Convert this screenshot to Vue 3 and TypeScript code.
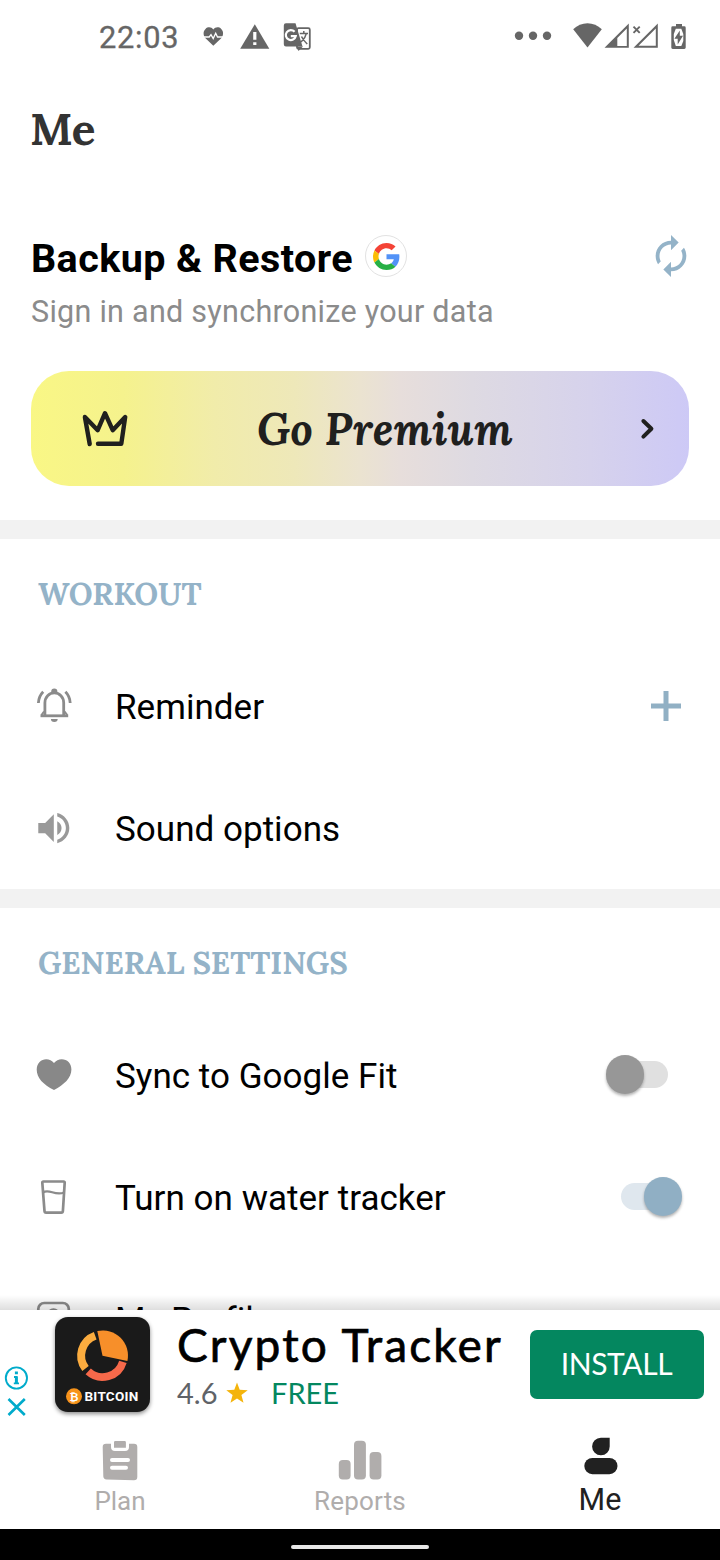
<script setup lang="ts">
interface Row {
  id: string
  label: string
  action?: 'add' | 'off' | 'on'
}

interface Section {
  title: string
  cls: string
  rows: Row[]
}

const sections: Section[] = [
  {
    title: 'WORKOUT',
    cls: 'workout',
    rows: [
      { id: 'bell', label: 'Reminder', action: 'add' },
      { id: 'sound', label: 'Sound options' },
    ],
  },
  {
    title: 'GENERAL SETTINGS',
    cls: 'general',
    rows: [
      { id: 'heart', label: 'Sync to Google Fit', action: 'off' },
      { id: 'glass', label: 'Turn on water tracker', action: 'on' },
      { id: 'profile', label: 'My Profile' },
    ],
  },
]
</script>

<template>
  <div class="screen">
    <div class="scroll">
      <header class="status">
        <span class="clock">22:03</span>
        <svg class="notif" width="112" height="32" viewBox="200 20 112 32">
          <path fill="#666" d="M213.300 45.700L205.500 38.200C203 35.300 203 31 205.500 28.900C208 26.600 211.400 27 213.300 29.400C215.300 27 218.800 26.600 221.200 28.900C223.700 31 223.700 35.300 221.200 38.200Z" />
          <path fill="none" stroke="#fff" stroke-width="1.300" d="M203 37H209.200L211 34.600L213.200 38.600L215.700 33.300L217.500 37H224" />
          <path fill="#666" d="M254.800 24.200L269.300 48.700H240.200Z" />
          <path fill="#fff" d="M253.200 32h3.200v7.800h-3.200zM253.200 42.200h3.200v2.900h-3.200z" />
          <rect x="297" y="28.200" width="12.800" height="20.600" rx="1.500" fill="none" stroke="#666" stroke-width="1.800" />
          <path fill="#666" d="M286 23.300H295.500L302.500 46.400H286A2.200 2.200 0 0 1 283.800 44.200V25.500A2.200 2.200 0 0 1 286 23.300Z" />
          <path fill="#666" d="M296.500 46.500h6.500l-4.500 4.500z" />
          <path fill="none" stroke="#666" stroke-width="1.500" d="M299.800 33.500H308M303.800 31V33.500M306.300 33.700C305.500 38 302.500 40.500 301 42M301.500 36.500C303 40 305 41.800 307.300 44" />
          <path fill="none" stroke="#fff" stroke-width="2.200" d="M294.600 31.800A5 5 0 1 0 295.700 36.200H290.800" />
        </svg>
        <svg class="system" width="176" height="32" viewBox="512 20 176 32">
          <g fill="#666">
            <circle cx="519" cy="35.800" r="4.200" />
            <circle cx="533" cy="35.800" r="4.200" />
            <circle cx="547" cy="35.800" r="4.200" />
            <path d="M573.200 29.300C581 21.300 594 21.300 601.800 29.300L587.500 47.500Z" />
            <path fill-rule="evenodd" d="M604.500 47.800L628.800 23.500V47.800ZM617.300 45.900H626.800V28.600L617.300 38Z" />
            <path fill-rule="evenodd" d="M633.500 47.800L657.800 23.500V47.800ZM638.500 45.800H655.800V28.500Z" />
            <path fill-rule="evenodd" d="M676 24H682V26.300H684.300A1.400 1.400 0 0 1 685.700 27.700V47.500A1.400 1.400 0 0 1 684.300 48.900H672.700A1.400 1.400 0 0 1 671.300 47.500V27.700A1.400 1.400 0 0 1 672.700 26.300H676ZM675.800 28.800L673.800 34V40L675.800 46L681.300 46L683.300 41V34L681.300 28.800Z" />
            <path d="M679.800 30.500V35.800H683L677.700 44.500V38.800H674.400Z" />
          </g>
          <path stroke="#666" stroke-width="1.900" d="M633.500 26.600L639.700 32.800M639.700 26.600L633.500 32.800" />
        </svg>
      </header>

      <h1 class="page-title">Me</h1>

      <section class="backup">
        <div class="backup-head">
          <h2>Backup &amp; Restore</h2>
          <span class="badge">
            <svg width="27" height="27" viewBox="0 0 48 48">
              <path fill="#f44336" d="M24 9.500c3.540 0 6.710 1.220 9.210 3.600l6.850-6.850C35.900 2.380 30.470 0 24 0 14.620 0 6.510 5.380 2.560 13.220l7.980 6.190C12.430 13.720 17.740 9.500 24 9.500z" />
              <path fill="#5292f7" d="M46.980 24.550c0-1.570-.15-3.090-.38-4.550H24v9.020h12.940c-.58 2.960-2.260 5.480-4.780 7.180l7.730 6c4.510-4.180 7.090-10.360 7.090-17.650z" />
              <path fill="#fbbc05" d="M10.530 28.590c-.48-1.450-.76-2.990-.76-4.590s.27-3.140.76-4.590l-7.980-6.190C.92 16.460 0 20.120 0 24c0 3.880.92 7.540 2.560 10.780l7.970-6.190z" />
              <path fill="#27b045" d="M24 48c6.480 0 11.930-2.130 15.890-5.810l-7.730-6c-2.150 1.450-4.920 2.300-8.160 2.300-6.260 0-11.570-4.220-13.470-9.910l-7.980 6.190C6.510 42.620 14.620 48 24 48z" />
            </svg>
          </span>
          <svg class="sync" width="46" height="46" viewBox="0 0 24 24" fill="#94b3c8">
            <path d="M12 6v3l4-4-4-4v3c-4.420 0-8 3.580-8 8 0 1.570.46 3.030 1.240 4.260L6.700 14.800c-.45-.83-.7-1.790-.7-2.800 0-3.310 2.690-6 6-6zm6.760 1.740L17.300 9.200c.44.84.7 1.790.7 2.800 0 3.310-2.690 6-6 6v-3l-4 4 4 4v-3c4.420 0 8-3.580 8-8 0-1.570-.46-3.030-1.240-4.260z" />
          </svg>
        </div>
        <p>Sign in and synchronize your data</p>
      </section>

      <div class="premium">
        <svg width="50" height="40" viewBox="80 409 50 40" class="line">
          <path stroke-width="4.400" d="M89.700 444L84.900 417L97.700 430.200L105 413.200L112.700 430.200L125.200 417L121.300 443.700H98" />
        </svg>
        <span>Go Premium</span>
        <svg width="16" height="24" viewBox="640 417 16 24" class="line">
          <path stroke-width="4" d="M643.400 421L651.400 428.800L643.400 436.600" />
        </svg>
      </div>

      <section v-for="s in sections" :key="s.title" class="group" :class="s.cls">
        <h3>{{ s.title }}</h3>
        <div v-for="r in s.rows" :key="r.id" class="row">
          <svg class="row-icon" width="48" height="48" viewBox="0 0 48 48">
            <g v-if="r.id === 'bell'" fill="none" stroke="#8b8b8b" stroke-width="2.800">
              <path d="M14.900 32V19.800A9.400 9.900 0 0 1 33.700 19.800V32" />
              <path d="M10.500 32.800H38.200" />
              <path d="M14 28.500L11.500 32M34.600 28.500L37.200 32" stroke-width="2" />
              <path fill="#8b8b8b" stroke="none" d="M21.200 10.500V8.700A3.100 3.100 0 0 1 27.400 8.700V10.500ZM20.900 36H27.700A3.400 3 0 0 1 20.900 36Z" />
              <path d="M13.200 8.800C10 12 8.600 15.600 8.400 20M35.400 8.800C38.600 12 40 15.600 40.200 20" />
            </g>
            <path v-else-if="r.id === 'sound'" fill="#999" transform="translate(3.100 2.400) scale(1.725)" d="M3 9v6h4l5 5V4L7 9H3zm13.500 3c0-1.770-1.020-3.290-2.500-4.030v8.050c1.480-.73 2.500-2.250 2.500-4.020zM14 3.230v2.060c2.890.86 5 3.540 5 6.710s-2.110 5.850-5 6.710v2.060c4.010-.91 7-4.490 7-8.770s-2.990-7.860-7-8.770z" />
            <path v-else-if="r.id === 'heart'" fill="#888" d="M24 38C13.200 32.500 6.700 26 6.700 17.500C6.700 11.300 11.200 7.300 16.200 7.300C19.200 7.300 22.200 8.700 24 11C25.900 8.700 28.700 7.300 31.700 7.300C37.200 7.300 41.400 11.300 41.400 17.500C41.400 26 34.200 32.500 24 38Z" />
            <g v-else-if="r.id === 'glass'" fill="none" stroke="#8b8b8b" stroke-width="2.700" stroke-linejoin="round">
              <path d="M13.300 7.500H33.700A1 1 0 0 1 34.700 8.600L32.900 37A1.800 1.800 0 0 1 31.200 38.700H16.200A1.800 1.800 0 0 1 14.500 37L12.300 8.600A1 1 0 0 1 13.300 7.500Z" />
              <path stroke-width="2.200" d="M13 18.500C19 14 25 22.500 34 18.500" />
            </g>
            <g v-else fill="none" stroke="#8b8b8b" stroke-width="2.700">
              <rect x="8.300" y="7" width="30.500" height="32" rx="6" />
              <circle cx="23.500" cy="18.500" r="5" />
            </g>
          </svg>
          <span class="label">{{ r.label }}</span>
          <svg v-if="r.action === 'add'" class="plus" width="32" height="32" viewBox="0 0 32 32">
            <path stroke="#91b0c4" stroke-width="5" d="M1 16H31M16 1V31" />
          </svg>
          <span v-else-if="r.action" class="toggle" :class="r.action"><i></i></span>
        </div>
      </section>
      <div class="fade"></div>
    </div>

    <aside class="ad">
      <svg class="choices" width="28" height="56" viewBox="2 1364 28 56" fill="none" stroke="#00abcb">
        <circle cx="16.400" cy="1378" r="10.600" stroke-width="1.900" />
        <path stroke-width="3" d="M16.400 1376.300V1384M16.400 1371.500V1374.300" />
        <path stroke-width="1.800" d="M14 1377H17M13.800 1383.400H19" />
        <path stroke-width="2.600" d="M8.500 1399L24.800 1415M24.800 1399L8.500 1415" />
      </svg>
      <div class="app-icon">
        <svg width="95" height="95" viewBox="55 1317 95 95">
          <path fill="#f78f2a" d="M97.300 1331A25.200 25.200 0 0 1 127.400 1361L102.500 1355.700Z" />
          <path fill="none" stroke="#fbac3f" stroke-width="8" d="M95.200 1335.700A21.200 21.200 0 0 0 85.500 1368.500" />
          <path fill="none" stroke="#f7694a" stroke-width="7.800" d="M88.200 1371.400A21.200 21.200 0 0 0 122.900 1361.800" />
          <circle cx="74" cy="1396.300" r="8" fill="#f7931a" />
          <text x="74" y="1400.500" text-anchor="middle" class="coin">₿</text>
          <text x="84.400" y="1401.200" textLength="54" class="brand">BITCOIN</text>
        </svg>
      </div>
      <div class="ad-copy">
        <div class="ad-title">Crypto Tracker</div>
        <div class="ad-meta">
          <span class="rate">4.6</span>
          <svg width="22" height="22" viewBox="0 0 22 22">
            <path fill="#f4b40c" d="M11 0.500L13.700 7.700L21.700 8.200L15.400 13.100L17.500 20.800L11 16.400L4.500 20.800L6.600 13.100L0.300 8.200L8.300 7.700Z" />
          </svg>
          <span class="free">FREE</span>
        </div>
      </div>
      <button class="install">INSTALL</button>
    </aside>

    <nav class="tabs">
      <a class="tab">
        <svg width="44" height="44" viewBox="98 1438 44 44">
          <path fill="#b0adac" d="M106 1443.800H111V1447A4 4 0 0 0 115 1451H125A4 4 0 0 0 129 1447V1443.800H134A3.300 3.300 0 0 1 137.300 1447.100V1476.900A3.300 3.300 0 0 1 134 1480.200L106.500 1479.400A3.300 3.300 0 0 1 103.300 1476.200L102.700 1447.100A3.300 3.300 0 0 1 106 1443.800Z" />
          <path fill="#b0adac" d="M115.300 1441H124.600A1.300 1.300 0 0 1 125.900 1442.300V1447.800H114V1442.300A1.300 1.300 0 0 1 115.300 1441Z" />
          <path stroke="#fff" stroke-width="4" stroke-linecap="round" d="M112 1460H128M112 1467.800H126" />
        </svg>
        <span>Plan</span>
      </a>
      <a class="tab reports">
        <svg width="44" height="44" viewBox="338 1438 44 44" fill="#b0adac">
          <rect x="338.800" y="1460" width="11.800" height="19.400" rx="4" />
          <rect x="354" y="1440.700" width="11.900" height="38.700" rx="4" />
          <rect x="369.600" y="1452" width="11.800" height="27.400" rx="4" />
        </svg>
        <span>Reports</span>
      </a>
      <a class="tab active">
        <svg width="44" height="44" viewBox="578 1434 44 44" fill="#212121">
          <path d="M609.700 1437.700V1446.400A8.800 8.800 0 1 1 600.900 1437.700Z" />
          <rect x="584.300" y="1458" width="33.200" height="16.200" rx="8.100" />
        </svg>
        <span>Me</span>
      </a>
    </nav>
    <div class="gesture"><i></i></div>
  </div>
</template>

<style>
body {
  margin: 0;
  background: #fff;
}
</style>

<style scoped>
.screen {
  width: 720px;
  height: 1560px;
  display: flex;
  flex-direction: column;
  overflow: hidden;
  background: #fff;
  font-family: Roboto, sans-serif;
  color: #000;
}
svg {
  display: block;
  flex: none;
}
h1, h2, h3, p {
  margin: 0;
}
.scroll {
  position: relative;
  height: 1310px;
  flex: none;
  overflow: hidden;
}
.status {
  height: 74px;
  box-sizing: border-box;
  padding: 20px 32px 0 99px;
  display: flex;
  align-items: flex-start;
  color: #666;
}
.clock {
  width: 101px;
  font-size: 30.800px;
  line-height: 36px;
  letter-spacing: 0.700px;
  -webkit-text-stroke: 0.300px #666;
}
.system {
  margin-left: auto;
}
.page-title {
  padding: 25px 0 0 30px;
  font: bold 44px/60px "Lora", "Liberation Serif", serif;
  color: #333;
}
.backup {
  padding: 75px 26px 0 31px;
}
.backup-head {
  display: flex;
  height: 48px;
  align-items: center;
}
.backup h2 {
  padding-top: 2px;
  font-size: 39.500px;
  line-height: 50px;
  font-weight: 700;
  letter-spacing: 0.400px;
  white-space: nowrap;
  width: 334px;
}
.badge {
  width: 40px;
  height: 40px;
  margin-bottom: 4px;
  border: 1px solid #e2e2e2;
  border-radius: 50%;
  display: grid;
  place-items: center;
}
.sync {
  margin: 0 0 4px auto;
}
.backup p {
  margin-top: 10px;
  font-size: 30.500px;
  line-height: 40px;
  letter-spacing: 0.270px;
  color: #8b8b8b;
  white-space: nowrap;
}
.premium {
  margin: 39px 31px 34px;
  height: 115px;
  padding: 0 33px 0 49px;
  border-radius: 38px;
  display: flex;
  align-items: center;
  background: linear-gradient(90deg, #f9f785 0%, #f5f28d 14%, #f1ecaa 28%, #eee8b9 40%, #ebe3d0 50%, #e7dedb 56%, #dedae2 67%, #d6d2ec 85%, #cdc9f6 100%);
  color: #20201e;
}
.premium span {
  flex: 1;
  padding: 0 0 0 127px;
  font: italic bold 44px/60px "Lora", "Liberation Serif", serif;
  letter-spacing: 0.100px;
}
.line {
  fill: none;
  stroke: #20201e;
  stroke-linecap: round;
  stroke-linejoin: round;
}
.group {
  border-top: 19px solid #f2f2f2;
  height: 350px;
  padding: 3px 0 0;
  box-sizing: content-box;
}
.workout {
  height: 347px;
}
.group h3 {
  height: 104px;
  padding-left: 38px;
  font: bold 31px/103px "Lora", "Liberation Serif", serif;
  color: #94b3c8;
  white-space: nowrap;
}
.general h3 {
  letter-spacing: -0.060px;
}
.row {
  height: 122px;
  padding: 0 38px 0 30px;
  display: flex;
  align-items: center;
}
.label {
  flex: 1;
  padding: 2px 0 0 37px;
  font-size: 35px;
  line-height: 48px;
  letter-spacing: 0.030px;
  white-space: nowrap;
}
.plus {
  margin: 0 0 3px;
}
.toggle {
  position: relative;
  width: 76px;
  height: 40px;
  margin-bottom: 3px;
  display: flex;
  align-items: center;
}
.toggle::before {
  content: "";
  width: 47px;
  height: 27px;
  margin: 0 auto;
  border-radius: 14px;
  background: #e0e0e0;
}
.toggle i {
  position: absolute;
  top: 0.500px;
  left: -0.500px;
  width: 38.500px;
  height: 38.500px;
  border-radius: 50%;
  background: #979797;
  box-shadow: 0 2px 3px rgba(0, 0, 0, 0.300);
}
.toggle.on::before {
  background: #dfe7ee;
}
.toggle.on i {
  left: auto;
  right: 0;
  background: #90afc4;
}
.fade {
  position: absolute;
  left: 0;
  right: 0;
  bottom: 0;
  height: 15px;
  background: linear-gradient(rgba(0, 0, 0, 0), rgba(0, 0, 0, 0.130));
}
.ad {
  height: 110px;
  flex: none;
  display: flex;
  align-items: flex-start;
  padding: 0 16px 0 2px;
  box-sizing: border-box;
}
.choices {
  margin-top: 54px;
}
.app-icon {
  width: 95px;
  height: 95px;
  margin: 7px 0 0 25px;
  border-radius: 13px;
  background: #1a1a1a;
  box-shadow: 0 2px 4px rgba(0, 0, 0, 0.450);
}
.coin {
  font: bold 11px "DejaVu Sans", sans-serif;
  fill: #fff;
}
.brand {
  font: bold 13.500px Roboto, sans-serif;
  fill: #fff;
}
.ad-copy {
  flex: 1;
  padding: 7px 0 0 27px;
}
.ad-title {
  font: 46px/56px "Google Sans", Lato, sans-serif;
  -webkit-text-stroke: 0.700px #000;
  letter-spacing: 2.150px;
  white-space: nowrap;
}
.ad-meta {
  display: flex;
  align-items: center;
  height: 40px;
  font: 29px/40px "Google Sans", Lato, sans-serif;
  color: #5f6368;
}
.rate {
  width: 49px;
}
.free {
  padding-left: 23px;
  color: #04875f;
}
.install {
  width: 174px;
  height: 69px;
  margin-top: 20px;
  padding: 0 1px 4px 0;
  border: 0;
  border-radius: 7px;
  background: #04875f;
  color: #fff;
  font: 30px/40px "Google Sans", Lato, sans-serif;
  letter-spacing: -0.400px;
}
.tabs {
  height: 109px;
  flex: none;
  display: flex;
}
.tab {
  width: 240px;
  display: flex;
  flex-direction: column;
  align-items: center;
  padding-top: 18px;
  box-sizing: border-box;
  font-size: 26px;
  line-height: 38px;
  color: #b0adac;
}
.reports {
  letter-spacing: 0.200px;
}
.active {
  padding: 14px 0 0;
  font-size: 30.500px;
  line-height: 43px;
  color: #212121;
}
.gesture {
  flex: 1;
  background: #000;
  display: flex;
  justify-content: center;
  padding-top: 16px;
}
.gesture i {
  width: 138px;
  height: 4px;
  border-radius: 2px;
  background: #e8e8e8;
}
</style>
